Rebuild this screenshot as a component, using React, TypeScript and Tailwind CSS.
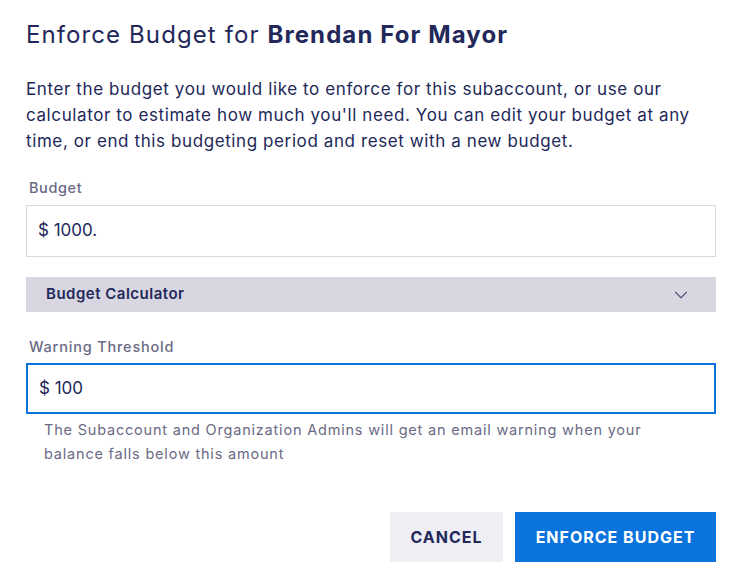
import { ChevronDown } from 'lucide-react';

export default function App() {
  return (
    <div
      className="w-[743px] h-[584px] bg-white text-[#22285a] pl-[26px] pr-[27px] pt-[19px]"
      style={{ fontFamily: 'Inter, "Noto Sans", sans-serif' }}
    >
      <h1 className="text-[24px] leading-[32px] font-normal tracking-[1.1px]">
        Enforce Budget for <span className="font-bold">Brendan For Mayor</span>
      </h1>
      <p className="mt-[25px] text-[17px] leading-[26px] tracking-[0.6px]">
        Enter the budget you would like to enforce for this subaccount, or use our calculator to
        estimate how much you'll need. You can edit your budget at any time, or end this budgeting
        period and reset with a new budget.
      </p>

      <label className="block mt-[24px] pl-[3px] text-[14.5px] leading-[20px] font-medium tracking-[0.6px] text-[#6b6a85]">
        Budget
      </label>
      <div className="mt-[7px] h-[52px] border border-[#d9d8e1] flex items-center px-[11px] text-[17px]">
        $ 1000.
      </div>

      <div className="mt-[20px] h-[35px] bg-[#d8d7e1] flex items-center justify-between pl-[20px] pr-[24px]">
        <span className="text-[15px] font-semibold tracking-[0.5px]">Budget Calculator</span>
        <ChevronDown className="w-[22px] h-[22px] text-[#55587a]" strokeWidth={1.3} />
      </div>

      <label className="block mt-[25px] pl-[3px] text-[14.5px] leading-[20px] font-medium tracking-[0.8px] text-[#6b6a85]">
        Warning Threshold
      </label>
      <div className="mt-[6px] h-[51px] border-2 border-[#0a72d8] flex items-center px-[11px] text-[17px]">
        $ 100
      </div>
      <p className="mt-[4px] pl-[18px] pr-[40px] text-[14.5px] leading-[24px] tracking-[0.8px] text-[#6b6a85]">
        The Subaccount and Organization Admins will get an email warning when your balance falls
        below this amount
      </p>

      <div className="mt-[46px] flex justify-end gap-[12px]">
        <button className="h-[50px] w-[113px] bg-[#efeef5] text-[16px] font-bold tracking-[1px] text-[#22285a]">
          CANCEL
        </button>
        <button className="h-[50px] w-[201px] bg-[#0a74dc] text-[16px] font-bold tracking-[1px] text-white">
          ENFORCE BUDGET
        </button>
      </div>
    </div>
  );
}
